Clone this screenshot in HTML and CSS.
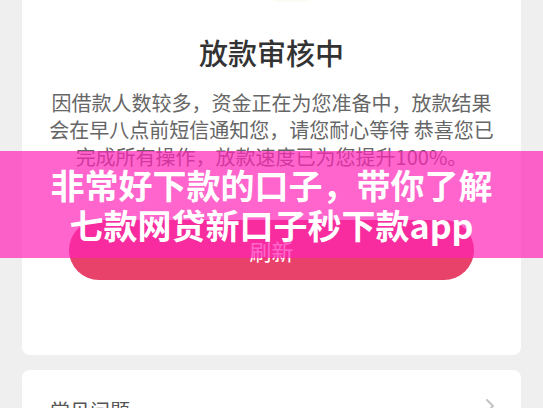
FILE: index.html
```html
<!DOCTYPE html>
<html lang="zh-CN">
<head>
<meta charset="utf-8">
<title>放款审核中</title>
<link rel="stylesheet" href="styles.css">
</head>
<body>
<div class="page">
  <section class="card status-card">
    <div class="hero"><span class="hero-glow"></span></div>
    <h1 class="status-title">放款审核中</h1>
    <p class="status-text">因借款人数较多，资金正在为您准备中，放款结果<br>会在早八点前短信通知您，请您耐心等待 恭喜您已<br>完成所有操作，放款速度已为您提升100%。</p>
    <button class="refresh-btn" type="button">刷新</button>
  </section>
  <section class="card faq-card">
    <div class="faq-row">
      <span class="faq-label">常见问题</span>
      <svg class="chevron" width="10" height="16" viewBox="0 0 10 16"><path d="M2 2 L8 8 L2 14" fill="none" stroke="#c4c4c4" stroke-width="2" stroke-linecap="round" stroke-linejoin="round"/></svg>
    </div>
  </section>
</div>
<div class="banner">
  <div class="banner-line">非常好下款的口子，带你了解</div>
  <div class="banner-line">七款网贷新口子秒下款app</div>
</div>
</body>
</html>
```

FILE: styles.css
```css
html, body {
  margin: 0;
  padding: 0;
  overflow: hidden;
  height: 100%;
}
body {
  background: #efefef;
  font-family: "Noto Sans CJK SC", "Noto Sans", sans-serif;
  position: relative;
}
.page {
  padding: 0 22px;
  display: flex;
  flex-direction: column;
  gap: 15px;
}
.card {
  background: #ffffff;
  border-radius: 8px;
}
.status-card {
  margin-top: -8px;
  padding: 0 0 75px;
  display: flex;
  flex-direction: column;
  align-items: center;
}
.hero {
  height: 40px;
  width: 100%;
  display: flex;
  justify-content: center;
}
.hero-glow {
  display: block;
  width: 42px;
  height: 11px;
  margin-left: 38px;
  border-radius: 0 0 50% 50%;
  background: linear-gradient(#f3f3dc, #fafaee 70%, #ffffff);
}
.status-title {
  margin: 0;
  font-size: 29px;
  line-height: 40px;
  font-weight: 500;
  color: #333333;
}
.status-text {
  margin: 17px 0 0;
  font-size: 20px;
  line-height: 27px;
  color: #666666;
  text-align: center;
  white-space: nowrap;
}
.refresh-btn {
  margin-top: 50px;
  width: 405px;
  height: 60px;
  border: none;
  border-radius: 30px;
  background: #e8426a;
  color: #ffffff;
  font-family: inherit;
  font-size: 22px;
  line-height: 30px;
  padding: 0;
}
.faq-card {
  height: 120px;
  padding: 26px 26px 0 28px;
}
.faq-row {
  display: flex;
  align-items: center;
  justify-content: space-between;
  height: 30px;
}
.faq-label {
  font-size: 20px;
  line-height: 30px;
  color: #555555;
}
.chevron {
  display: block;
  margin-top: -10px;
}
.banner {
  position: absolute;
  left: 0;
  right: 0;
  top: 151px;
  height: 107px;
  box-sizing: border-box;
  padding-top: 14px;
  background: rgba(255, 35, 182, 0.7);
  text-align: center;
  color: #ffffff;
  font-weight: 700;
  font-size: 34px;
  line-height: 40px;
  white-space: nowrap;
}
```
